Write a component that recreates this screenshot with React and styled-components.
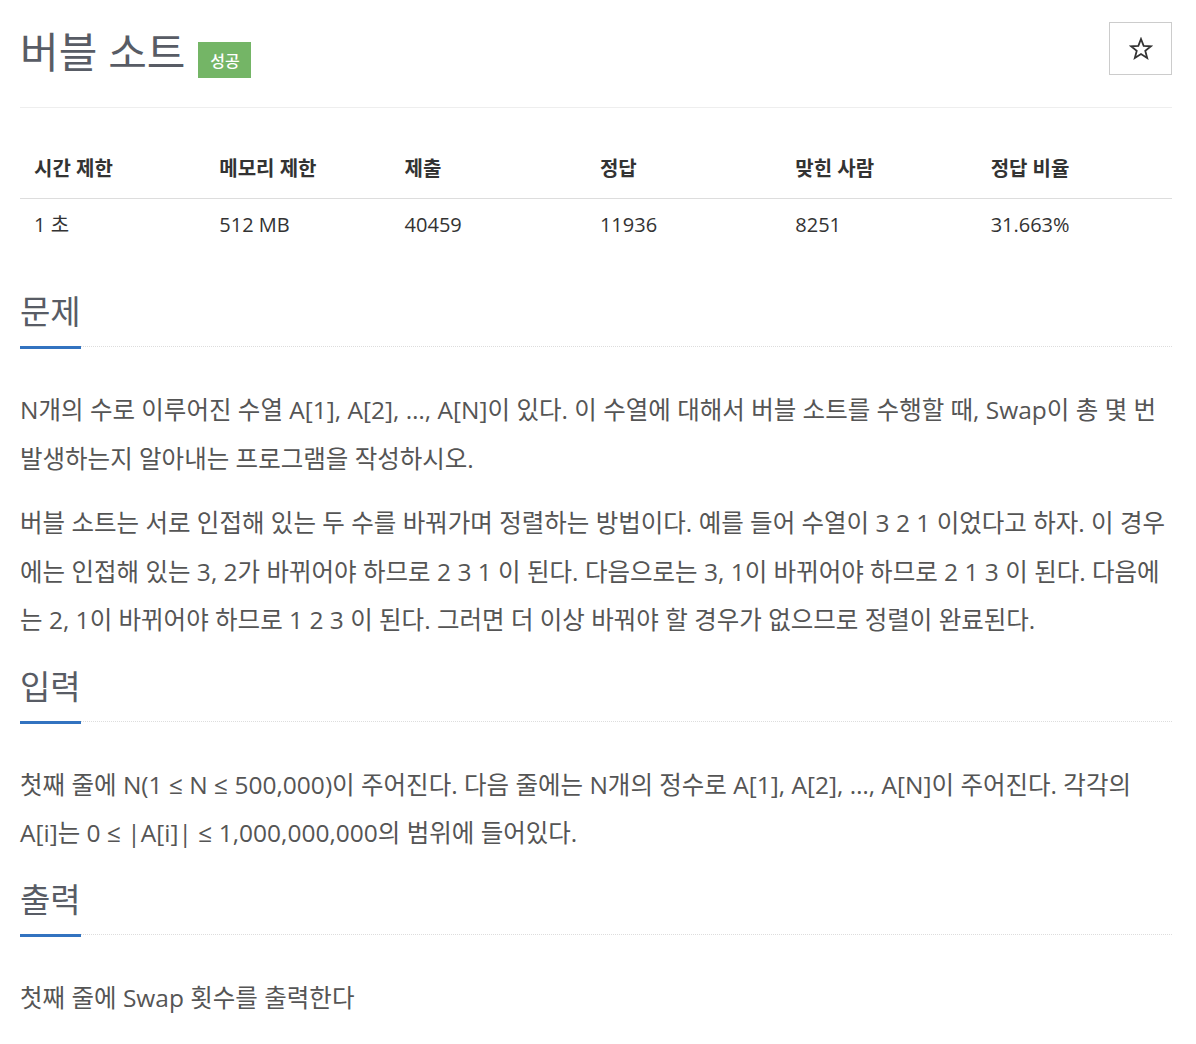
import styled, { createGlobalStyle } from "styled-components";

const GlobalStyle = createGlobalStyle`
  body {
    margin: 0;
    background: #fff;
    font-family: "Open Sans", "Noto Sans CJK KR", sans-serif;
    color: #555;
  }
`;

const stats = [
  { label: "시간 제한", value: "1 초", width: "16%" },
  { label: "메모리 제한", value: "512 MB", width: "16%" },
  { label: "제출", value: "40459", width: "17%" },
  { label: "정답", value: "11936", width: "17%" },
  { label: "맞힌 사람", value: "8251", width: "17%" },
  { label: "정답 비율", value: "31.663%", width: "17%" },
];

function StarIcon() {
  return (
    <svg width="24" height="24" viewBox="0 0 24 24">
      <polygon
        points="12,2 14.65,8.86 21.99,9.26 16.28,13.89 18.17,20.99 12,17 5.83,20.99 7.72,13.89 2.01,9.26 9.35,8.86"
        fill="none"
        stroke="#333"
        strokeWidth="1.8"
        strokeLinejoin="miter"
      />
    </svg>
  );
}

function Section({ title, children }) {
  return (
    <section>
      <Headline>
        <HeadlineTitle>{title}</HeadlineTitle>
      </Headline>
      <Body>{children}</Body>
    </section>
  );
}

function App() {
  return (
    <>
      <GlobalStyle />
      <Page>
        <Header>
          <TitleRow>
            <Title>버블 소트</Title>
            <Badge>성공</Badge>
          </TitleRow>
          <StarButton type="button" aria-label="즐겨찾기">
            <StarIcon />
          </StarButton>
        </Header>

        <StatsTable>
          <thead>
            <tr>
              {stats.map((s) => (
                <th key={s.label} style={{ width: s.width }}>
                  {s.label}
                </th>
              ))}
            </tr>
          </thead>
          <tbody>
            <tr>
              {stats.map((s) => (
                <td key={s.label}>{s.value}</td>
              ))}
            </tr>
          </tbody>
        </StatsTable>

        <Section title="문제">
          <p>
            N개의 수로 이루어진 수열 A[1], A[2], …, A[N]이 있다. 이 수열에 대해서
            버블 소트를 수행할 때, Swap이 총 몇 번 발생하는지 알아내는 프로그램을
            작성하시오.
          </p>
          <p>
            버블 소트는 서로 인접해 있는 두 수를 바꿔가며 정렬하는 방법이다. 예를
            들어 수열이 3 2 1 이었다고 하자. 이 경우에는 인접해 있는 3, 2가
            바뀌어야 하므로 2 3 1 이 된다. 다음으로는 3, 1이 바뀌어야 하므로 2 1 3
            이 된다. 다음에는 2, 1이 바뀌어야 하므로 1 2 3 이 된다. 그러면 더 이상
            바꿔야 할 경우가 없으므로 정렬이 완료된다.
          </p>
        </Section>

        <Section title="입력">
          <p>
            첫째 줄에 N(1 ≤ N ≤ 500,000)이 주어진다. 다음 줄에는 N개의 정수로
            A[1], A[2], …, A[N]이 주어진다. 각각의 A[i]는 0 ≤ |A[i]| ≤
            1,000,000,000의 범위에 들어있다.
          </p>
        </Section>

        <Section title="출력">
          <p>첫째 줄에 Swap 횟수를 출력한다</p>
        </Section>
      </Page>
    </>
  );
}

const Page = styled.div`
  width: 1152px;
  margin-left: 20px;
  padding-bottom: 20px;
`;

const Header = styled.header`
  display: flex;
  justify-content: space-between;
  align-items: flex-start;
  height: 108px;
  padding-top: 22px;
  box-sizing: border-box;
  border-bottom: 1px solid #eee;
`;

const TitleRow = styled.div`
  display: flex;
  align-items: center;
  gap: 13px;
  padding-top: 4px;
`;

const Title = styled.h1`
  margin: 0;
  font-size: 42px;
  line-height: 50px;
  font-weight: 400;
  color: #585c65;
`;

const Badge = styled.span`
  display: inline-flex;
  align-items: center;
  justify-content: center;
  width: 53px;
  height: 36px;
  margin-top: 16px;
  background: #74b566;
  color: #fff;
  font-size: 16px;
  font-weight: 500;
`;

const StarButton = styled.button`
  display: flex;
  align-items: center;
  justify-content: center;
  width: 63px;
  height: 53px;
  padding: 0;
  background: #fff;
  border: 1px solid #ccc;
  cursor: pointer;
`;

const StatsTable = styled.table`
  width: 100%;
  margin-top: 32px;
  margin-bottom: 41px;
  border-collapse: collapse;
  table-layout: fixed;
  font-size: 20px;
  color: #333;

  th,
  td {
    text-align: left;
    padding: 14px;
    line-height: 24px;
  }

  th {
    padding: 17px 14px;
    font-weight: 700;
    border-bottom: 1px solid #ddd;
  }
`;

const Headline = styled.div`
  border-bottom: 1px dotted #ddd;
  margin-top: 22px;

  section:first-of-type & {
    margin-top: 0;
  }
`;

const HeadlineTitle = styled.h2`
  display: inline-block;
  margin: 0 0 -3px;
  padding-bottom: 14px;
  font-size: 33px;
  line-height: 40px;
  font-weight: 400;
  color: #585c65;
  border-bottom: 3px solid #3273c0;
`;

const Body = styled.div`
  padding-top: 39px;
  font-size: 24.5px;
  line-height: 48.5px;
  color: #555;

  p {
    margin: 0 0 16px;
  }
`;

export default App;
